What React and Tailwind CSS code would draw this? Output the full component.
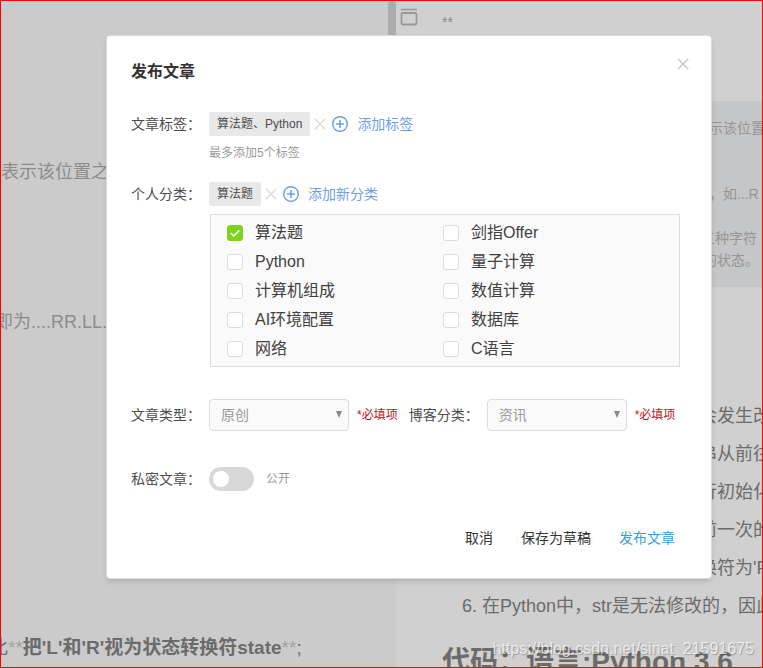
import React, { useState } from "react";

const categories = [
  "算法题",
  "剑指Offer",
  "Python",
  "量子计算",
  "计算机组成",
  "数值计算",
  "AI环境配置",
  "数据库",
  "网络",
  "C语言",
];

const previewLines = ["会发生改", "串从前往", "行初始化", "前一次的", "换符为'F"];

function Cross({ className }) {
  return (
    <svg viewBox="0 0 12 12" className={className} fill="none" stroke="currentColor" aria-hidden="true">
      <path d="M0.8 0.8 11.2 11.2M11.2 0.8 0.8 11.2" strokeWidth="1.5" />
    </svg>
  );
}

function PlusCircle() {
  return (
    <svg viewBox="0 0 16 16" className="h-4 w-4" fill="none" stroke="currentColor" aria-hidden="true">
      <circle cx="8" cy="8" r="7.3" strokeWidth="1.4" />
      <path d="M8 4v8M4 8h8" strokeWidth="1.6" />
    </svg>
  );
}

function TagLine({ tag, addText }) {
  return (
    <div className="flex h-6 items-center">
      <span className="h-6 rounded-xs bg-[#e8e8e8] px-2 text-xs leading-6 text-[#4d4d4d]">{tag}</span>
      <button type="button" aria-label={`删除${tag}`} className="ml-1 text-[#dcdcdc]">
        <Cross className="h-3 w-3" />
      </button>
      <button type="button" className="ml-1.5 flex items-center gap-[9px] text-sm text-[#6f9fe6]">
        <PlusCircle />
        {addText}
      </button>
    </div>
  );
}

function SelectField({ id, label, value }) {
  return (
    <div className="flex items-center">
      <label htmlFor={id} className="w-[78px] shrink-0 whitespace-nowrap">
        {label}
      </label>
      <div className="relative">
        <select
          id={id}
          defaultValue={value}
          className="block h-8 w-[140px] appearance-none rounded border border-[#dcdcdc] bg-[#fafafa] px-[11px] text-sm text-[#999]"
        >
          <option>{value}</option>
        </select>
        <svg
          viewBox="0 0 6 7"
          className="pointer-events-none absolute right-[7px] top-3 h-[7px] w-1.5 fill-[#8a8a8a]"
          aria-hidden="true"
        >
          <path d="M0 0h6L3 7z" />
        </svg>
      </div>
      <span className="ml-2 whitespace-nowrap text-xs text-[#c70c16]">*必填项</span>
    </div>
  );
}

function EditorPane() {
  return (
    <div className="flex w-[51.9%] shrink-0 justify-between overflow-hidden bg-[#cbcbcb]">
      <div className="whitespace-nowrap pt-[157px] text-lg leading-7 text-[#8c8c8c]">
        <p>表示该位置之</p>
        <p className="-ml-1.5 mt-[122px]">即为....RR.LL.</p>
        <p className="-ml-3 mt-[298px] text-[19px] text-[#6b6b6b]">
          此<span className="text-[#a3a3a3]">**</span>
          <strong>把'L'和'R'视为状态转换符state</strong>
          <span className="text-[#a3a3a3]">**</span>;
        </p>
      </div>
      <div className="h-24 w-2 shrink-0 rounded-full bg-[#acacac]" />
    </div>
  );
}

function PreviewPane() {
  return (
    <div className="min-w-0 flex-1 overflow-hidden whitespace-nowrap bg-[#d0d0d0] text-lg text-[#6b6b6b]">
      <div className="flex h-[100px] items-start pl-1 pt-[7px]">
        <svg viewBox="0 0 18 18" className="h-[18px] w-[18px]" fill="none" stroke="#999" aria-hidden="true">
          <path d="M1 1.5h16" strokeWidth="1.5" />
          <rect x="1.5" y="5" width="15" height="11.5" rx="1.2" strokeWidth="1.8" />
        </svg>
        <span className="ml-6 mt-1 text-sm leading-5 text-[#85878c]">**</span>
      </div>
      <div className="h-[186px] bg-[#c5c6c8] pl-[313px] pt-4 text-sm leading-[22px] text-[#959595]">
        <p>示该位置</p>
        <p className="mt-11">，如...R</p>
        <p className="-ml-2 mt-[22px]">三种字符</p>
        <p className="-ml-1.5">的状态。</p>
      </div>
      <ul className="pl-[303px] pt-[110px] leading-[38px]">
        {previewLines.map((line) => (
          <li key={line}>{line}</li>
        ))}
      </ul>
      <p className="pl-[66px] leading-[38px]">6. 在Python中，str是无法修改的，因此</p>
      <h1 className="mt-4 pl-[46px] text-[28px] font-bold leading-[42px]">代码：语言:Python 3.6</h1>
    </div>
  );
}

export default function App() {
  const [checked, setChecked] = useState(["算法题"]);
  const [isPrivate, setIsPrivate] = useState(false);

  const toggle = (name) =>
    setChecked((prev) => (prev.includes(name) ? prev.filter((c) => c !== name) : [...prev, name]));

  return (
    <div className="relative flex h-screen overflow-hidden border border-[#ff0000] font-['Liberation_Sans','Noto_Sans_CJK_SC',sans-serif]">
      <EditorPane />
      <PreviewPane />

      <span className="absolute bottom-1.5 right-2 text-base text-white/70 [text-shadow:1px_1px_1px_rgba(0,0,0,0.25)]">
        https://blog.csdn.net/sinat_21591675
      </span>

      {/* Publish dialog */}
      <div className="absolute inset-0 flex items-start pl-[105px] pr-[50px] pt-[34px]">
        <form
          role="dialog"
          aria-labelledby="dialog-title"
          onSubmit={(e) => e.preventDefault()}
          className="flex-1 rounded border border-[#dadada] bg-white pb-[30px] pl-6 pr-[31px] pt-6 text-sm leading-5 text-[#4d4d4d] shadow-md"
        >
          <div className="-mr-[9px] flex items-start justify-between">
            <h2 id="dialog-title" className="text-base font-bold leading-6 text-[#333]">
              发布文章
            </h2>
            <button type="button" aria-label="关闭" className="-mt-0.5 text-[#c8c8c8]">
              <Cross className="h-3 w-3" />
            </button>
          </div>

          <div className="mt-7 flex">
            <span className="w-[78px] shrink-0 whitespace-nowrap leading-6">文章标签：</span>
            <div>
              <TagLine tag="算法题、Python" addText="添加标签" />
              <p className="mt-[7px] text-xs leading-5 text-[#999]">最多添加5个标签</p>
            </div>
          </div>

          <div className="mt-[19px] flex">
            <span className="w-[78px] shrink-0 whitespace-nowrap leading-6">个人分类：</span>
            <div className="flex-1">
              <TagLine tag="算法题" addText="添加新分类" />
              <div className="ml-px mt-2 grid grid-cols-2 border border-[#dcdcdc] bg-[#fafafa] pb-[3px] pl-4 pr-5 pt-[3px]">
                {categories.map((name) => (
                  <label key={name} className="flex h-[29px] items-center gap-3 text-base text-[#404040]">
                    <span className="relative h-4 w-4">
                      <input
                        type="checkbox"
                        checked={checked.includes(name)}
                        onChange={() => toggle(name)}
                        className="block h-4 w-4 appearance-none rounded-[3px] border border-[#dcdcdc] bg-white checked:border-[#7ed321] checked:bg-[#7ed321]"
                      />
                      {checked.includes(name) && (
                        <svg
                          viewBox="0 0 16 16"
                          className="pointer-events-none absolute inset-0 h-4 w-4"
                          fill="none"
                          stroke="#fff"
                          aria-hidden="true"
                        >
                          <path d="M3.8 8 6.8 11 12.4 5.2" strokeWidth="1.5" />
                        </svg>
                      )}
                    </span>
                    {name}
                  </label>
                ))}
              </div>
            </div>
          </div>

          <div className="mt-8 flex gap-[11px]">
            <SelectField id="article-type" label="文章类型：" value="原创" />
            <SelectField id="blog-category" label="博客分类：" value="资讯" />
          </div>

          <div className="mt-9 flex items-center">
            <label htmlFor="private" className="w-[78px] shrink-0 whitespace-nowrap">
              私密文章：
            </label>
            <input
              id="private"
              type="checkbox"
              role="switch"
              checked={isPrivate}
              onChange={(e) => setIsPrivate(e.target.checked)}
              className="h-6 w-[45px] appearance-none rounded-full bg-[#d8d8d8] p-1 before:block before:h-4 before:w-4 before:rounded-full before:bg-white checked:bg-[#7ed321] checked:before:ml-auto"
            />
            <span className="ml-3 text-xs text-[#999]">{isPrivate ? "私密" : "公开"}</span>
          </div>

          <div className="mt-[37px] flex justify-end gap-7 pr-[5px] text-[#333]">
            <button type="button">取消</button>
            <button type="button">保存为草稿</button>
            <button type="submit" className="text-[#349edf]">
              发布文章
            </button>
          </div>
        </form>
      </div>
    </div>
  );
}
